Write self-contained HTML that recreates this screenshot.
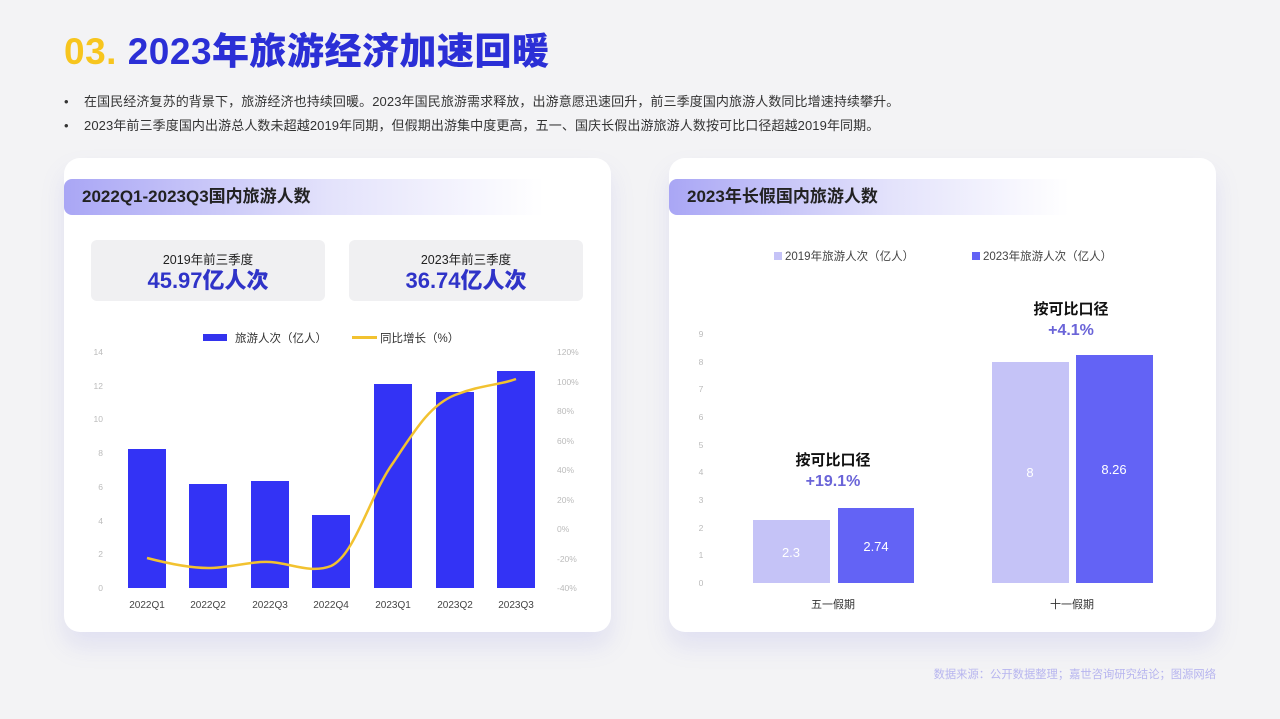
<!DOCTYPE html>
<html><head><meta charset="utf-8"><style>
*{margin:0;padding:0;box-sizing:border-box}
body{width:1280px;height:719px;background:#f3f3f5;font-family:"Liberation Sans","Noto Sans CJK SC",sans-serif;position:relative;overflow:hidden;color:#222}
.abs{position:absolute}
.title{left:64px;top:21px;font-size:37px;font-weight:900;color:#2b2fd6;letter-spacing:0.5px;white-space:nowrap}
.title span{color:#f7c51e}
.bul{left:64px;font-size:13px;color:#333;white-space:nowrap;letter-spacing:0.1px}
.bul b{display:inline-block;width:20px;font-weight:normal}
.card{background:#fff;border-radius:16px;box-shadow:0 14px 24px rgba(120,120,220,0.15)}
.hd{height:36px;border-radius:8px 0 0 8px;background:linear-gradient(90deg,#a9a6f5,#e3e2fb 55%,rgba(255,255,255,0));font-size:17px;font-weight:bold;line-height:36px;padding-left:18px;color:#222}
.box{background:#f0f0f2;border-radius:6px;text-align:center}
.box .a{font-size:12.5px;margin-top:9px;color:#222}
.box .b{font-size:22px;font-weight:900;color:#2f33c8;line-height:26px}
</style></head><body>
<div class="abs title"><span>03.</span> 2023年旅游经济加速回暖</div>
<div class="abs bul" style="top:91px"><b>•</b>在国民经济复苏的背景下，旅游经济也持续回暖。2023年国民旅游需求释放，出游意愿迅速回升，前三季度国内旅游人数同比增速持续攀升。</div>
<div class="abs bul" style="top:115px"><b>•</b>2023年前三季度国内出游总人数未超越2019年同期，但假期出游集中度更高，五一、国庆长假出游旅游人数按可比口径超越2019年同期。</div>

<div class="abs card" style="left:64px;top:158px;width:547px;height:474px"></div>
<div class="abs hd" style="left:64px;top:179px;width:480px">2022Q1-2023Q3国内旅游人数</div>
<div class="abs box" style="left:91px;top:240px;width:234px;height:61px"><div class="a">2019年前三季度</div><div class="b">45.97亿人次</div></div>
<div class="abs box" style="left:349px;top:240px;width:234px;height:61px"><div class="a">2023年前三季度</div><div class="b">36.74亿人次</div></div>

<div class="abs card" style="left:669px;top:158px;width:547px;height:474px"></div>
<div class="abs hd" style="left:669px;top:179px;width:400px">2023年长假国内旅游人数</div>

<svg class="abs" style="left:0;top:0" width="1280" height="719" font-family="Liberation Sans,Noto Sans CJK SC,sans-serif">
<rect x="203" y="334" width="24" height="7" fill="#3333ee"/>
<text x="235" y="342" font-size="11.5" fill="#333">旅游人次（亿人）</text>
<rect x="352" y="336" width="25" height="3" fill="#f2c230"/>
<text x="380" y="342" font-size="11.5" fill="#333">同比增长（%）</text>
<g font-size="8.5" fill="#bbb" text-anchor="end">
<text x="103" y="355">14</text><text x="103" y="389">12</text><text x="103" y="422">10</text><text x="103" y="456">8</text><text x="103" y="490">6</text><text x="103" y="524">4</text><text x="103" y="557">2</text><text x="103" y="591">0</text>
</g>
<g font-size="8.5" fill="#bbb">
<text x="557" y="355">120%</text><text x="557" y="385">100%</text><text x="557" y="414">80%</text><text x="557" y="444">60%</text><text x="557" y="473">40%</text><text x="557" y="503">20%</text><text x="557" y="532">0%</text><text x="557" y="562">-20%</text><text x="557" y="591">-40%</text>
</g>
<g fill="#3333f5">
<rect x="128" y="449" width="38" height="139"/>
<rect x="189" y="484" width="38" height="104"/>
<rect x="251" y="481" width="38" height="107"/>
<rect x="312" y="515" width="38" height="73"/>
<rect x="374" y="384" width="38" height="204"/>
<rect x="436" y="392" width="38" height="196"/>
<rect x="497" y="371" width="38" height="217"/>
</g>
<path d="M147,558 C170,564 190,568 208,568 C230,568 250,561 270,562 C290,563 310,574 331,566 C355,555 370,495 393,463 C415,430 430,405 455,395 C480,385 500,385 516,379" fill="none" stroke="#f2c230" stroke-width="2.5"/>
<g font-size="10" fill="#444" text-anchor="middle">
<text x="147" y="608">2022Q1</text><text x="208" y="608">2022Q2</text><text x="270" y="608">2022Q3</text><text x="331" y="608">2022Q4</text><text x="393" y="608">2023Q1</text><text x="455" y="608">2023Q2</text><text x="516" y="608">2023Q3</text>
</g>
<rect x="774" y="252" width="8" height="8" fill="#c5c3f7"/>
<text x="785" y="260" font-size="11.5" fill="#444">2019年旅游人次（亿人）</text>
<rect x="972" y="252" width="8" height="8" fill="#6363f5"/>
<text x="983" y="260" font-size="11.5" fill="#444">2023年旅游人次（亿人）</text>
<g font-size="8.5" fill="#bbb" text-anchor="middle">
<text x="701" y="337">9</text><text x="701" y="365">8</text><text x="701" y="392">7</text><text x="701" y="420">6</text><text x="701" y="448">5</text><text x="701" y="475">4</text><text x="701" y="503">3</text><text x="701" y="531">2</text><text x="701" y="558">1</text><text x="701" y="586">0</text>
</g>
<rect x="753" y="520" width="77" height="63" fill="#c5c3f7"/>
<rect x="838" y="508" width="76" height="75" fill="#6363f5"/>
<rect x="992" y="362" width="77" height="221" fill="#c5c3f7"/>
<rect x="1076" y="355" width="77" height="228" fill="#6363f5"/>
<g font-size="13" fill="#fff" text-anchor="middle">
<text x="791" y="557">2.3</text><text x="876" y="551">2.74</text><text x="1030" y="477">8</text><text x="1114" y="474">8.26</text>
</g>
<g text-anchor="middle">
<text x="833" y="465" font-size="15" font-weight="bold" fill="#111">按可比口径</text>
<text x="833" y="486" font-size="16" font-weight="bold" fill="#6a64d8">+19.1%</text>
<text x="1071" y="314" font-size="15" font-weight="bold" fill="#111">按可比口径</text>
<text x="1071" y="335" font-size="16" font-weight="bold" fill="#6a64d8">+4.1%</text>
<text x="833" y="608" font-size="11" fill="#333">五一假期</text>
<text x="1072" y="608" font-size="11" fill="#333">十一假期</text>
</g>
<text x="1216" y="678" font-size="11.3" fill="#b7b5ef" text-anchor="end">数据来源：公开数据整理；嘉世咨询研究结论；图源网络</text>
</svg>
</body></html>
